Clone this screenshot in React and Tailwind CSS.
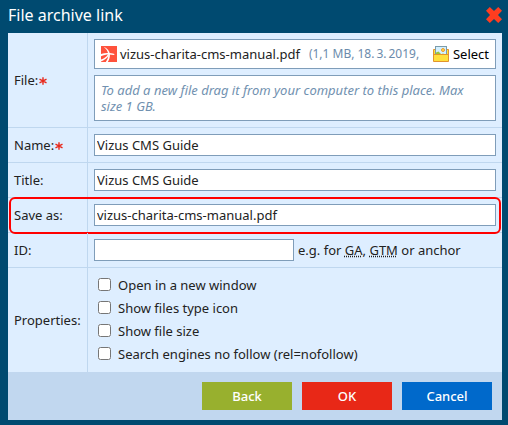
import React, { useState } from 'react';

const inputClass = "block h-[22px] border border-[#7f9db9] bg-white px-0.5 text-[#222] outline-none";

const properties = [
  { id: "newWindow", label: "Open in a new window" },
  { id: "typeIcon", label: "Show files type icon" },
  { id: "fileSize", label: "Show file size" },
  { id: "noFollow", label: "Search engines no follow (rel=nofollow)" },
];

const CloseIcon = () => (
  <svg viewBox="0 0 16 16" className="size-4" aria-hidden="true">
    <path
      d="M0 3.8 L3.8 0 L8 4 L12.2 0 L16 3.8 L12 8 L16 12.2 L12.2 16 L8 12 L3.8 16 L0 12.2 L4 8 Z"
      fill="#ff3d20"
    />
  </svg>
);

const PdfIcon = () => (
  <svg viewBox="0 0 16 16" className="size-4 shrink-0" aria-hidden="true">
    <rect width="16" height="16" fill="#ff523c" />
    <g fill="#fff">
      <path d="M2.6 0.8 C6.2 2 8.6 4.8 8.9 8.2 C9.1 11 8.3 13.8 6.8 16 H4.8 C6.6 13.6 7.4 11 7.2 8.6 C7 5.6 5.4 2.8 2.6 0.8 Z" />
      <path d="M0 8 C4 6.6 9.5 6.7 13.4 8.1 L13.2 9.1 C9 8.1 4 8.3 0 10.2 Z" />
      <path d="M8 8.8 C6.6 12 3.6 14.2 0 15.4 V13.6 C3 12.6 5.4 11 6.8 8.6 Z" />
    </g>
  </svg>
);

const FolderIcon = () => (
  <svg viewBox="0 0 16 16" className="size-4 shrink-0" aria-hidden="true">
    <path d="M0.5 3.5 H15.5 V15.5 H0.5 Z" fill="#ffe03c" stroke="#e2942c" />
    <rect x="2.5" y="0.5" width="11" height="9" fill="#d3f0ff" stroke="#7b9cab" />
    <path d="M3 6.5 L5.5 5.5 L9 9 H3 Z" fill="#9ac43c" />
    <path d="M8 8.5 L10 7.5 L13 9 H8 Z" fill="#9ac43c" />
    <circle cx="10" cy="4" r="1.5" fill="#ffdc50" stroke="#f09a28" />
    <path d="M1 8.5 H15 V15 H1 Z" fill="#ffe03c" />
    <path d="M1 8.5 H15" fill="none" stroke="#e2942c" />
  </svg>
);

const Required = () => (
  <svg viewBox="0 0 8 8" className="ml-px mt-0.5 size-2" aria-label="required">
    <path d="M4 0.3 V7.7 M0.5 2.2 L7.5 5.8 M7.5 2.2 L0.5 5.8" stroke="#e8291c" strokeWidth="1.4" />
  </svg>
);

const Row = ({ label, htmlFor, required, highlighted, last, children }) => (
  <div className={`relative flex border-[#bfd7ef] ${last ? "" : "border-b"}`}>
    <div className="flex w-20 shrink-0 items-center border-r border-[#bfd7ef] pl-1.5">
      {htmlFor ? <label htmlFor={htmlFor}>{label}</label> : <span>{label}</span>}
      {required && <Required />}
    </div>
    <div className="min-w-0 flex-1 p-1.5">{children}</div>
    {highlighted && (
      <div className="pointer-events-none absolute -top-px -bottom-0.5 left-px right-px rounded-md border-2 border-[#ff0000]" />
    )}
  </div>
);

const FileArchiveLink = () => {
  const [form, setForm] = useState({
    name: "Vizus CMS Guide",
    title: "Vizus CMS Guide",
    saveAs: "vizus-charita-cms-manual.pdf",
    id: "",
  });
  const [checked, setChecked] = useState({});

  const handleChange = e => setForm({ ...form, [e.target.id]: e.target.value });

  return (
    <form
      onSubmit={e => e.preventDefault()}
      className="min-h-screen bg-[#004a70] pb-[5px] pl-2 pr-1.5 font-['Noto_Sans',sans-serif] text-[13px] leading-4 text-[#222]"
    >
      <div className="flex h-[33px] items-center justify-between pb-[3px]">
        <h1 className="text-base leading-5 text-white">File archive link</h1>
        <button type="button" aria-label="Close">
          <CloseIcon />
        </button>
      </div>

      <div className="bg-[#deeeff]">
        <Row label="File:" required>
          <div className="flex h-[30px] items-center border border-[#7f9db9] bg-white px-1.5">
            <PdfIcon />
            <span className="ml-[3px] whitespace-nowrap">vizus-charita-cms-manual.pdf</span>
            <span className="ml-[9px] min-w-0 flex-1 overflow-hidden whitespace-nowrap text-xs leading-4 text-[#6b8bab]">
              (1,1 MB, 18.&#8239;3.&#8239;2019,
            </span>
            <button type="button" className="flex items-center gap-1 text-black">
              <FolderIcon />
              Select
            </button>
          </div>
          <div className="mt-1.5 h-[46px] border border-[#7f9db9] bg-white py-1.5 pl-1.5 pr-6 italic text-[#7191b0]">
            To add a new file drag it from your computer to this place. Max size 1 GB.
          </div>
        </Row>
        <Row label="Name:" htmlFor="name" required>
          <input id="name" type="text" value={form.name} onChange={handleChange} className={`${inputClass} w-full`} />
        </Row>
        <Row label="Title:" htmlFor="title">
          <input id="title" type="text" value={form.title} onChange={handleChange} className={`${inputClass} w-full`} />
        </Row>
        <Row label="Save as:" htmlFor="saveAs" highlighted>
          <input id="saveAs" type="text" value={form.saveAs} onChange={handleChange} className={`${inputClass} w-full`} />
        </Row>
        <Row label="ID:" htmlFor="id">
          <div className="flex items-center gap-1">
            <input id="id" type="text" value={form.id} onChange={handleChange} className={`${inputClass} w-[200px]`} />
            <span>
              e.g. for <abbr title="Google Analytics">GA</abbr>,{" "}
              <abbr title="Google Tag Manager">GTM</abbr> or anchor
            </span>
          </div>
        </Row>
        <Row label="Properties:" last>
          {properties.map(p => (
            <div key={p.id} className="flex h-[23px] items-center gap-[7px] pb-0.5 pl-1">
              <input
                id={p.id}
                type="checkbox"
                checked={!!checked[p.id]}
                onChange={e => setChecked({ ...checked, [p.id]: e.target.checked })}
                className="size-[13px]"
              />
              <label htmlFor={p.id}>{p.label}</label>
            </div>
          ))}
        </Row>
      </div>

      <div className="flex justify-end gap-2.5 bg-[#c1d7ef] p-2.5 font-medium text-white">
        <button type="button" className="h-7 w-[90px] bg-[#98b02e]">Back</button>
        <button type="submit" className="h-7 w-[90px] bg-[#e82817]">OK</button>
        <button type="button" className="h-7 w-[90px] bg-[#0069cb]">Cancel</button>
      </div>
    </form>
  );
};

export default FileArchiveLink;
